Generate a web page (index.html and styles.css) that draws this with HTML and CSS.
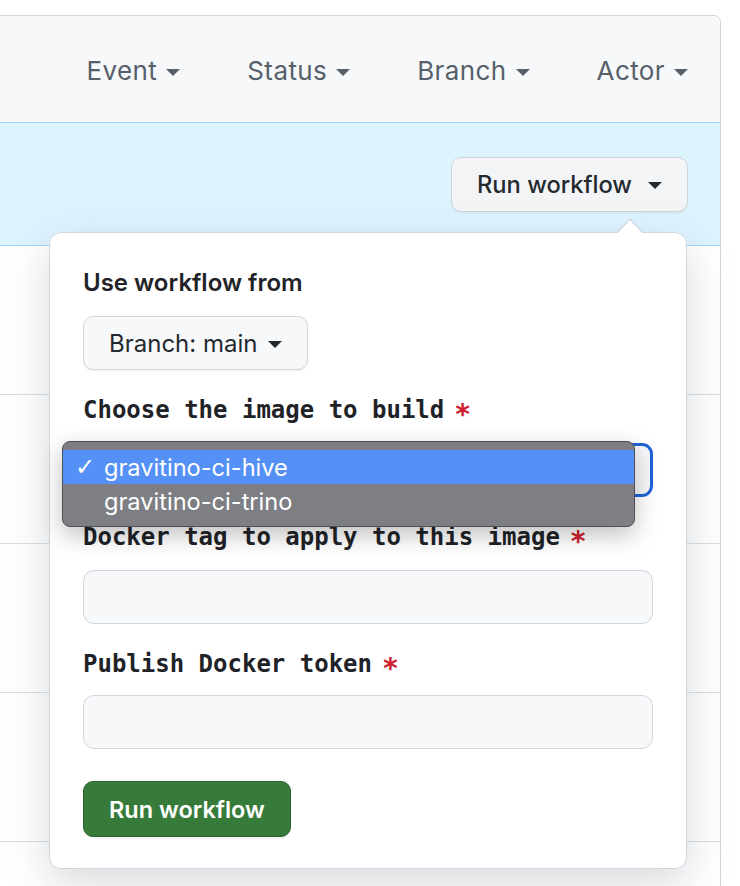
FILE: index.html
```html
<!DOCTYPE html>
<html>
<head>
<meta charset="utf-8">
<link rel="stylesheet" href="styles.css">
</head>
<body>
<div class="box">
  <div class="box-header">
    <div class="filters">
      <span class="filter">Event<i class="caret"></i></span>
      <span class="filter">Status<i class="caret"></i></span>
      <span class="filter">Branch<i class="caret"></i></span>
      <span class="filter">Actor<i class="caret"></i></span>
    </div>
  </div>
  <div class="blue-row">
    <button class="btn btn-run">Run workflow<i class="caret caret-dark"></i></button>
  </div>
  <div class="row"></div>
  <div class="row"></div>
  <div class="row"></div>
  <div class="row"></div>
  <div class="row"></div>

  <div class="popup">
    <div class="label-sans">Use workflow from</div>
    <button class="btn btn-branch">Branch: main<i class="caret caret-dark"></i></button>

    <div class="group">
      <div class="label-mono">Choose the image to build<span class="req">*</span></div>
      <div class="select-wrap">
        <div class="select"></div>
        <div class="menu">
          <div class="opt opt-active"><span class="check">✓</span>gravitino-ci-hive</div>
          <div class="opt"><span class="check"></span>gravitino-ci-trino</div>
        </div>
      </div>
    </div>

    <div class="group">
      <div class="label-mono">Docker tag to apply to this image<span class="req">*</span></div>
      <div class="input"></div>
    </div>

    <div class="group group-last">
      <div class="label-mono">Publish Docker token<span class="req">*</span></div>
      <div class="input"></div>
    </div>

    <button class="btn btn-primary">Run workflow</button>
  </div>
</div>
</body>
</html>
```
FILE: styles.css
```css
html, body {
  margin: 0;
  padding: 0;
  background: #ffffff;
  overflow: hidden;
}
body {
  font-family: Inter, "Liberation Sans", sans-serif;
  color: #1f2328;
}
.box {
  position: relative;
  margin-top: 15px;
  margin-left: -10px;
  width: 731px;
  height: 1000px;
  box-sizing: border-box;
  border: 1px solid #d0d7de;
  border-radius: 7px;
  background: #ffffff;
}
.box-header {
  height: 106px;
  background: #f6f8fa;
  border-radius: 7px 7px 0 0;
  display: flex;
  align-items: center;
  justify-content: flex-end;
  padding-right: 32px;
}
.filters {
  display: flex;
  gap: 67px;
  margin-top: 3px;
}
.filter {
  display: flex;
  align-items: center;
  font-size: 26px;
  color: #57606a;
  letter-spacing: 0.4px;
}
.caret {
  display: inline-block;
  width: 0;
  height: 0;
  border-top: 7px solid #57606a;
  border-left: 7px solid transparent;
  border-right: 7px solid transparent;
  margin-left: 9px;
  margin-top: 3px;
}
.caret-dark {
  border-top-color: #24292f;
}
.blue-row {
  height: 122px;
  background: #ddf4ff;
  border-top: 1px solid #a8d6fa;
  border-bottom: 1px solid #a8d6fa;
  display: flex;
  align-items: center;
  justify-content: flex-end;
  padding-right: 32px;
}
.btn {
  display: inline-flex;
  align-items: center;
  font-family: Inter, "Liberation Sans", sans-serif;
  font-size: 24px;
  font-weight: 500;
  color: #24292f;
  background: #f3f4f6;
  border: 1px solid #cfd4d9;
  border-radius: 10px;
  height: 55px;
  padding: 0 25px 0 25px;
  box-shadow: 0 2px 0 rgba(31,35,40,0.04);
  cursor: pointer;
}
.btn-run {
  font-size: 23.7px;
}
.btn .caret {
  margin-left: 16px;
}
.row {
  height: 149px;
  box-sizing: border-box;
  border-bottom: 1px solid #d8dee4;
}
.popup {
  position: absolute;
  left: 58px;
  top: 216px;
  width: 638px;
  height: 637px;
  box-sizing: border-box;
  background: #ffffff;
  border: 1px solid #d0d7de;
  border-radius: 12px;
  box-shadow: 0 14px 42px rgba(140,149,159,0.35);
  padding: 33px 33px 0 33px;
}
.popup::before,
.popup::after {
  content: "";
  position: absolute;
  width: 0;
  height: 0;
  border-left: 14px solid transparent;
  border-right: 14px solid transparent;
}
.popup::before {
  right: 42px;
  top: -15px;
  border-bottom: 15px solid #d0d7de;
}
.popup::after {
  right: 43px;
  top: -13px;
  border-left-width: 13px;
  border-right-width: 13px;
  border-bottom: 14px solid #ffffff;
}
.label-sans {
  font-size: 24px;
  font-weight: 600;
  line-height: 33px;
  color: #1f2328;
}
.btn-branch {
  margin-top: 17px;
  height: 54px;
  background: #f6f8fa;
  border-color: #d0d7de;
  font-weight: 400;
}
.btn-branch .caret {
  margin-left: 11px;
}
.group {
  margin-top: 22px;
}
.label-mono {
  font-family: "DejaVu Sans Mono", "Liberation Mono", monospace;
  font-size: 24px;
  font-weight: 700;
  line-height: 36px;
  color: #1f2328;
  margin-bottom: 15px;
  white-space: nowrap;
}
.group-last .label-mono {
  margin-bottom: 13px;
}
.req {
  color: #cf222e;
  margin-left: 10px;
  font-size: 28px;
  line-height: 0;
  vertical-align: -6px;
}
.select-wrap {
  position: relative;
}
.select {
  height: 54px;
  box-sizing: border-box;
  border: 3px solid #1f63d6;
  border-radius: 11px;
  background: #f6f8fa;
}
.input {
  height: 54px;
  box-sizing: border-box;
  border: 1.5px solid #d0d7de;
  border-radius: 11px;
  background: #f6f8fa;
}
.menu {
  position: absolute;
  left: -21px;
  top: -2px;
  width: 573px;
  height: 86px;
  box-sizing: border-box;
  padding-top: 8px;
  background: #7d7f84;
  border: 1px solid #4e5055;
  border-radius: 8px;
  box-shadow: 0 8px 24px rgba(0,0,0,0.25);
  overflow: hidden;
}
.opt {
  display: flex;
  align-items: center;
  height: 34px;
  font-family: Inter, "Liberation Sans", sans-serif;
  font-size: 23.6px;
  color: #ffffff;
}
.opt-active {
  background: #5590f6;
}
.check {
  display: inline-block;
  width: 29px;
  padding-left: 12px;
  font-family: "DejaVu Sans", sans-serif;
  font-size: 24px;
}
.btn-primary {
  margin-top: 32px;
  height: 56px;
  font-size: 23.5px;
  color: #ffffff;
  font-weight: 600;
  background: #367b3a;
  border-color: #2a6530;
  padding: 0 25px;
}
```
